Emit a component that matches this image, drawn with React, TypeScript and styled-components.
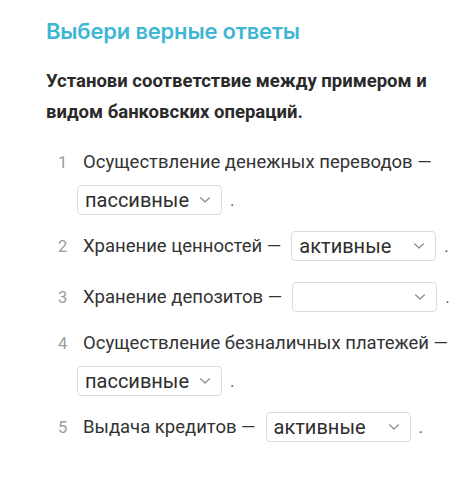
import React from "react";
import styled, { createGlobalStyle } from "styled-components";

const Global = createGlobalStyle`
  html, body { margin: 0; padding: 0; background: #fff; }
  body { font-family: Roboto, "Liberation Sans", sans-serif; color: #2b2b2b; }
`;

const Page = styled.div`
  padding: 15px 16px 30px 46px;
  width: 471px;
  box-sizing: border-box;
`;

const Title = styled.h1`
  margin: 0;
  font-family: Inter, "Noto Sans", sans-serif;
  font-weight: 600;
  font-size: 22px;
  line-height: 32px;
  color: #41b6d3;
  letter-spacing: -0.2px;
`;

const Task = styled.p`
  margin: 19px 0 0 0;
  font-family: Roboto, sans-serif;
  font-weight: 700;
  font-size: 18.5px;
  line-height: 31px;
  color: #2a2a2a;
`;

const List = styled.ol`
  list-style: none;
  margin: 15px 0 0 12px;
  padding: 0;
  display: flex;
  flex-direction: column;
  gap: 3px;
`;

const Item = styled.li`
  display: grid;
  grid-template-columns: 25px 1fr;
  align-items: start;
`;

const Num = styled.span<{ $h: number }>`
  display: flex;
  align-items: center;
  height: ${(p) => p.$h}px;
  font-size: 16.5px;
  color: #9b9b9b;
`;

const Lines = styled.div`
  display: flex;
  flex-direction: column;
`;

const Line = styled.div<{ $indent?: number; $h: number }>`
  display: flex;
  align-items: center;
  height: ${(p) => p.$h}px;
  margin-left: ${(p) => p.$indent ?? 0}px;
  font-size: 18.5px;
  color: #333;
  white-space: nowrap;
`;

const SelectBox = styled.div<{ $gap?: number }>`
  position: relative;
  box-sizing: border-box;
  width: 145px;
  height: 30px;
  margin-left: ${(p) => p.$gap ?? 0}px;
  border: 1px solid #dcdcdc;
  border-radius: 4px;
  background: #fff;
  padding-left: 7px;
  display: flex;
  align-items: center;
  font-size: 20px;
  color: #2e2e2e;
  overflow: hidden;
`;

const Chevron = styled.svg`
  position: absolute;
  right: 10px;
  top: 50%;
  transform: translateY(-50%);
`;

const Dot = styled.span`
  margin-left: 8px;
  font-size: 17px;
  color: #555;
`;

type Row = { text: string; value: string; wrap: boolean };

const rows: Row[] = [
  { text: "Осуществление денежных переводов —", value: "пассивные", wrap: true },
  { text: "Хранение ценностей —", value: "активные", wrap: false },
  { text: "Хранение депозитов —", value: "", wrap: false },
  { text: "Осуществление безналичных платежей —", value: "пассивные", wrap: true },
  { text: "Выдача кредитов —", value: "активные", wrap: false },
];

const Select = ({ value, gap }: { value: string; gap?: number }) => (
  <SelectBox $gap={gap}>
    {value}
    <Chevron width="12" height="8" viewBox="0 0 12 8" fill="none">
      <path d="M1.5 1.8 L6 6 L10.5 1.8" stroke="#8a8a8a" strokeWidth="1.2" strokeLinecap="round" strokeLinejoin="round" />
    </Chevron>
  </SelectBox>
);

export default function App() {
  return (
    <>
      <Global />
      <Page>
        <Title>Выбери верные ответы</Title>
        <Task>
          Установи соответствие между примером и
          <br />
          видом банковских операций.
        </Task>
        <List>
          {rows.map((r, i) => (
            <Item key={i}>
              <Num $h={r.wrap ? 38 : 48}>{i + 1}</Num>
              <Lines>
                {r.wrap ? (
                  <>
                    <Line $h={38}>{r.text}</Line>
                    <Line $h={38} $indent={-6}>
                      <Select value={r.value} />
                      <Dot>.</Dot>
                    </Line>
                  </>
                ) : (
                  <Line $h={48}>
                    {r.text}
                    <Select value={r.value} gap={10} />
                    <Dot>.</Dot>
                  </Line>
                )}
              </Lines>
            </Item>
          ))}
        </List>
      </Page>
    </>
  );
}
